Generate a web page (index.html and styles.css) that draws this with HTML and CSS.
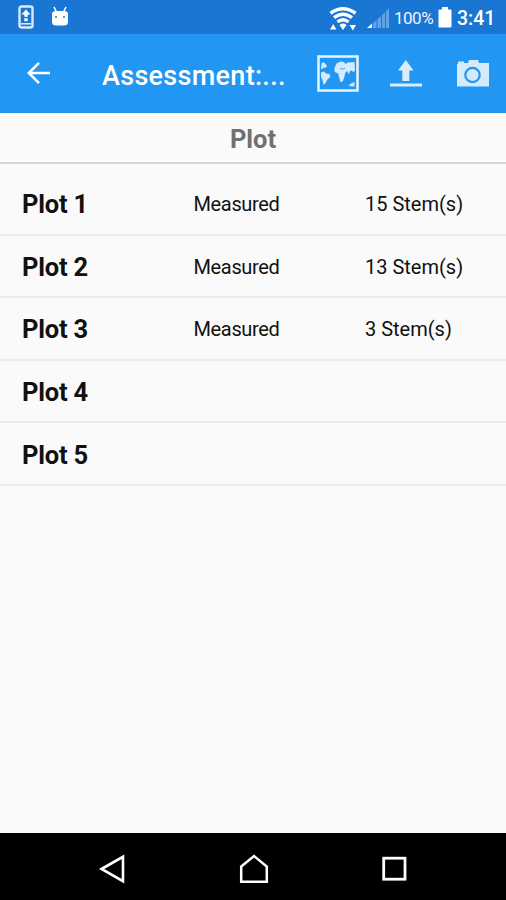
FILE: index.html
```html
<!DOCTYPE html>
<html lang="en">
<head>
<meta charset="utf-8">
<title>Assessment</title>
<link rel="stylesheet" href="styles.css">
</head>
<body>
<div class="screen">
  <div class="status">
    <svg class="phone" width="16" height="24" viewBox="0 0 16 24"><rect x="1.5" y="1.5" width="13" height="21" rx="2" fill="none" stroke="#dce9fb" stroke-width="2.4"/><path d="M3 18.8h10" stroke="#dce9fb" stroke-width="1.6"/><path d="M8 4.500l4.500 5H9.700v2.300H6.300V9.500H3.500z" fill="#fff"/><path d="M6.300 13.200h3.400v3H6.300z" fill="#fff"/></svg>
    <svg class="robot" width="18" height="22" viewBox="0 0 18 22"><path d="M3 1l2.500 5M15 1l-2.500 5" stroke="#fff" stroke-width="1.600"/><path d="M1 8q0-3 4-3h8q4 0 4 3v8q0 3.500-4 3.500H5q-4 0-4-3.500z" fill="#fff"/><circle cx="5" cy="11" r="1" fill="#1976d2"/><circle cx="13" cy="11" r="1" fill="#1976d2"/></svg>
    <svg class="wifi" width="28" height="24" viewBox="0 0 28 24"><g fill="none" stroke="#fff" stroke-width="3.500"><path d="M1.500 6.200Q14-2.600 26.500 6.200"/><path d="M5 10.700q9-6.800 18 0"/><path d="M8.500 15q5.500-4.500 11 0"/></g><path d="M10.500 18q3.500-2.800 7 0L14 23z" fill="#fff"/><path d="M1 22.500l3.200-5.500 3.200 5.500zM20.500 18H27l-3.200 5.500z" fill="#fff"/></svg>
    <svg class="signal" width="22" height="21" viewBox="0 0 22 21"><path d="M5 16.500V20H0zM6 15.300l3.500-3.200V20H6zM10.500 11.200L14 8v12h-3.500zM15 7l3-2.800V20h-3zM19 3.200L22 .5V20h-3z" fill="#62a2e6"/><path d="M0 20l5-4.500V20z" fill="#fff"/></svg>
    <span class="percent">100%</span>
    <svg class="battery" width="14" height="21" viewBox="0 0 14 21"><path d="M4 0h6v2.500h2.500q1 0 1 1v16q0 1-1 1h-11q-1 0-1-1v-16q0-1 1-1H4z" fill="#fff"/></svg>
    <span class="time">3:41</span>
  </div>
  <header class="appbar">
    <svg class="back" width="24" height="24" viewBox="0 0 24 24"><path d="M23 12H1.800M12 1.800L1.800 12 12 22.200" fill="none" stroke="#fff" stroke-width="2.600"/></svg>
    <h1 class="title">Assessment:...</h1>
    <svg class="map" width="42" height="37" viewBox="0 0 42 37"><rect x="1.500" y="1.500" width="39" height="34" fill="none" stroke="#e1f1fe" stroke-width="2.600"/><g fill="#d4eafd"><path d="M4.500 8.500l2-1.500 2 2 1.500 2-1.500 2-2-.5-1 1.500H4z"/><path d="M4 17.500l3-1 2 2 3.500.5.800 3-3 2.500-1.300 3-2.500 2.500-1-5L4 22z"/><path d="M17.500 13l2-4.500 4-2L27 7l1.500 2 2.500-1.500 6.500-.5.500 8-1.500 2.500-1.500-2-2 .5-1 3.500-2-3.500-1.500 1.500-1 4-1.500 4.500-2.500 1.500-1.300-5-1-4-3.500-1.500z"/><path d="M31.500 31l2.500-2.500L37.500 27v4.500z"/></g><path d="M23 13.500l3 .6 2-.8" stroke="#2196f3" stroke-width=".8" fill="none"/></svg>
    <svg class="upload" width="32" height="28" viewBox="0 0 32 28"><path d="M15.800 0L23.500 10.500h-4.200V21h-7V10.500H8z" fill="#d9edfe"/><path d="M0 25h32" stroke="#d9edfe" stroke-width="3"/></svg>
    <svg class="camera" width="32" height="27" viewBox="0 0 32 27"><path d="M0 4h1V1.500h6V3h4l1-3h9l1 3h10v23.500H0z" fill="#d4eafd"/><circle cx="15.500" cy="15" r="7.200" fill="none" stroke="#2196f3" stroke-width="2.200"/></svg>
  </header>
  <h2 class="heading">Plot</h2>
  <main class="list">
    <div class="row"><b>Plot 1</b><span class="state">Measured</span><span>15 Stem(s)</span></div>
    <div class="row"><b>Plot 2</b><span class="state">Measured</span><span>13 Stem(s)</span></div>
    <div class="row"><b>Plot 3</b><span class="state">Measured</span><span>3 Stem(s)</span></div>
    <div class="row"><b>Plot 4</b></div>
    <div class="row"><b>Plot 5</b></div>
  </main>
  <nav class="nav">
    <svg width="28" height="30" viewBox="0 0 28 30"><path d="M2.500 15L24 2.800v24.400z" fill="none" stroke="#fff" stroke-width="2.600"/></svg>
    <svg width="30" height="30" viewBox="0 0 30 30"><path d="M2.200 12.500L15 2l12.800 10.500v15.200H2.200z" fill="none" stroke="#fff" stroke-width="2.500"/></svg>
    <svg width="28" height="30" viewBox="0 0 28 30"><rect x="2.700" y="4.200" width="21.300" height="21" fill="none" stroke="#fff" stroke-width="2.800"/></svg>
  </nav>
</div>
</body>
</html>
```
FILE: styles.css
```css
* { box-sizing: border-box; }
body { margin: 0; font-family: Roboto, "Liberation Sans", sans-serif; }
svg { display: block; flex: none; }
.screen {
  width: 506px;
  height: 900px;
  display: flex;
  flex-direction: column;
  background: #fafafa;
  overflow: hidden;
}
.status {
  height: 34px;
  flex: none;
  display: flex;
  align-items: flex-start;
  padding: 5px 0 0 18px;
  background: #1976d2;
  color: #fff;
  white-space: nowrap;
}
.robot { margin: 1px 0 0 17px; }
.wifi { margin: 2px 0 0 260px; }
.signal { margin: 3px 0 0 10px; }
.percent { width: 40px; margin: 3px 0 0 5px; font-size: 17px; line-height: 20px; letter-spacing: -0.5px; color: #eef5fd; }
.battery { margin: 2px 0 0 4px; }
.time { margin: 4px 0 0 5px; font-size: 19.5px; line-height: 20px; font-weight: 500; }
.appbar {
  height: 79px;
  flex: none;
  display: flex;
  align-items: flex-start;
  padding: 21px 0 0 27px;
  background: #2196f3;
  border-bottom: 1px solid #2790e3;
}
.back { margin-top: 6px; }
.title {
  width: 186px;
  margin: 5px 0 0 51px;
  color: #fff;
  font-size: 27px;
  line-height: 32px;
  font-weight: 500;
  letter-spacing: 0.3px;
  white-space: nowrap;
}
.map { margin-left: 29px; }
.upload { margin: 5px 0 0 31px; }
.camera { margin: 5px 0 0 35px; }
.heading {
  height: 51px;
  flex: none;
  margin: 0;
  padding-top: 1px;
  border-bottom: 2px solid #d6d6d6;
  color: #707070;
  font-size: 25.5px;
  line-height: 50px;
  font-weight: 700;
  text-align: center;
}
.list { flex: 1; padding-top: 9px; }
.row {
  height: 62.6px;
  display: grid;
  grid-template-columns: 171.5px 171.5px 1fr;
  align-items: center;
  padding: 2px 0 0 22px;
  border-bottom: 2px solid #ececec;
  color: #111;
  font-size: 20px;
}
.row b { font-size: 25.5px; font-weight: 700; letter-spacing: -0.2px; }
.state { letter-spacing: -0.35px; }
.nav {
  height: 67px;
  flex: none;
  display: flex;
  justify-content: center;
  gap: 112px;
  padding: 21px 0 0 2px;
  background: #000;
}
```
